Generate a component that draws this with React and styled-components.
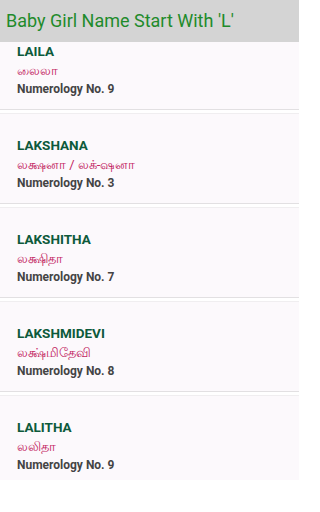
import React from 'react'
import styled, { createGlobalStyle } from 'styled-components'

const names = [
    { name: 'LAILA', tamil: 'லைலா', number: 9 },
    { name: 'LAKSHANA', tamil: 'லக்ஷனா / லக்-ஷனா', number: 3 },
    { name: 'LAKSHITHA', tamil: 'லக்ஷிதா', number: 7 },
    { name: 'LAKSHMIDEVI', tamil: 'லக்ஷ்மிதேவி', number: 8 },
    { name: 'LALITHA', tamil: 'லலிதா', number: 9 },
]

const App = () => {
    return (
        <Page>
            <GlobalStyle />
            <Header>Baby Girl Name Start With 'L'</Header>
            <List>
                {names.map((item, i) => (
                    <Card key={item.name} clipped={i === 0}>
                        <Name>{item.name}</Name>
                        <Tamil>{item.tamil}</Tamil>
                        <Numerology>Numerology No. {item.number}</Numerology>
                    </Card>
                ))}
            </List>
        </Page>
    )
}

export default App

const GlobalStyle = createGlobalStyle`
body{
    margin: 0;
    background: #ffffff;
    font-family: Roboto, 'Noto Sans', sans-serif;
}
`

const Page = styled.div`
width: 299px;
height: 512px;
overflow: hidden;
background: #ffffff;
`

const Header = styled.div`
height: 42px;
background: #d4d4d4;
color: #1f8b2b;
font-size: 18px;
line-height: 42px;
padding-left: 6px;
white-space: nowrap;
`

const List = styled.div`
display: flex;
flex-direction: column;
`

const Card = styled.div.withConfig({ shouldForwardProp: (p) => p !== 'clipped' })`
display: flex;
flex-direction: column;
background: #fcf9fc;
padding: ${(props) => (props.clipped ? '0' : '22px')} 17px 10px;
border-top: ${(props) => (props.clipped ? 'none' : '1px solid #f0eef0')};
border-bottom: 1px solid #e2e0e2;
margin-bottom: 3px;

&:last-child{
    padding-bottom: 5px;
    border-bottom: none;
}
`

const Name = styled.div`
font-size: 13.5px;
font-weight: 700;
line-height: 19px;
color: #0d5a3b;
`

const Tamil = styled.div`
font-size: 13px;
line-height: 19px;
color: #c2245f;
`

const Numerology = styled.div`
font-size: 12px;
font-weight: 700;
line-height: 19px;
color: #444444;
`
